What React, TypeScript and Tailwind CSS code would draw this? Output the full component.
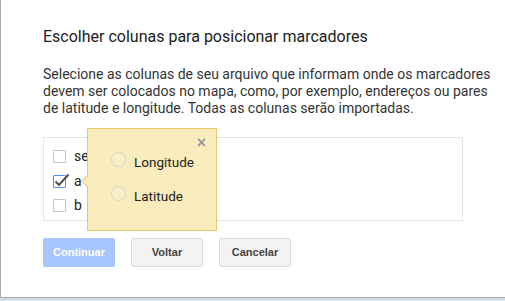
import React from 'react'

const columns = [
    { id: 'setor', label: 'setor', checked: false },
    { id: 'a', label: 'a', checked: true },
    { id: 'b', label: 'b', checked: false },
]

const options = ['Longitude', 'Latitude']

const Checkbox = ({ checked }: { checked: boolean }) => (
    <div className={`relative w-[13px] h-[13px] shrink-0 rounded-[1px] border bg-white ${checked ? 'border-[#4d90fe]' : 'border-[#c6c6c6]'}`}>
        {checked && (
            <svg className="absolute left-[0px] top-[-3px] overflow-visible" width="16" height="15" viewBox="0 0 16 15">
                <path d="M1.5 8.5 L5 12 L14.5 1.5" fill="none" stroke="#555" strokeWidth="2.2" />
            </svg>
        )}
    </div>
)

const App = () => {
    return (
        <div className="w-[505px] h-[301px] overflow-hidden bg-[#d4dee7] font-['Roboto',sans-serif]">
            <div className="relative h-[298px] bg-white border-l border-b border-[#a8a8a8] pl-[42px] pt-[27px]">
                {/* title */}
                <h1 className="text-[16px] leading-[20px] text-[#212121]">
                    Escolher colunas para posicionar marcadores
                </h1>

                <p className="mt-[19px] whitespace-nowrap text-[14px] leading-[17px] text-[#333]">
                    Selecione as colunas de seu arquivo que informam onde os marcadores<br />
                    devem ser colocados no mapa, como, por exemplo, endereços ou pares<br />
                    de latitude e longitude. Todas as colunas serão importadas.
                </p>

                {/* columns list */}
                <div className="mt-[20px] w-[420px] h-[84px] border border-[#e5e5e5] pt-[12px] pl-[9px] flex flex-col gap-[11.5px]">
                    {columns.map((col) => (
                        <div key={col.id} className="flex items-center gap-[8px] h-[13px]">
                            <Checkbox checked={col.checked} />
                            <span className="text-[14px] leading-[17px] text-[#222]">{col.label}</span>
                        </div>
                    ))}
                </div>

                {/* buttons */}
                <div className="mt-[17px] flex gap-[16px] font-['Liberation_Sans',Arial,sans-serif] text-[11px] font-bold">
                    <button className="w-[72px] h-[29px] rounded-[2px] border border-[#a6c6fd] bg-[#a6c6fd] text-white">
                        Continuar
                    </button>
                    <button className="w-[72px] h-[29px] rounded-[2px] border border-[#dcdcdc] bg-[#f3f3f3] text-[#444]">
                        Voltar
                    </button>
                    <button className="w-[72px] h-[29px] rounded-[2px] border border-[#dcdcdc] bg-[#f3f3f3] text-[#444]">
                        Cancelar
                    </button>
                </div>

                {/* popup */}
                <div className="absolute left-[86px] top-[128px] w-[130px] h-[103px] bg-[#f9edbe] border border-[#f0c36d] pt-[23px] pl-[23px]">
                    <div className="absolute left-[-7px] top-[45px] w-0 h-0 border-y-[7px] border-y-transparent border-r-[7px] border-r-[#f0c36d]" />
                    <div className="absolute left-[-6px] top-[46px] w-0 h-0 border-y-[6px] border-y-transparent border-r-[7px] border-r-[#f9edbe]" />
                    <span className="absolute right-[10px] top-[5px] font-['Liberation_Sans',Arial,sans-serif] font-bold text-[16px] leading-[18px] text-[#999]">×</span>
                    <div className="flex flex-col gap-[15px]">
                        {options.map((opt) => (
                            <div key={opt} className="flex items-start gap-[8px]">
                                <div className="w-[15px] h-[15px] shrink-0 rounded-full border border-[#d2d2d2] bg-[#faf0c8]" />
                                <span className="pt-[2px] text-[13.5px] leading-[17px] text-[#222]">{opt}</span>
                            </div>
                        ))}
                    </div>
                </div>
            </div>
        </div>
    )
}

export default App
